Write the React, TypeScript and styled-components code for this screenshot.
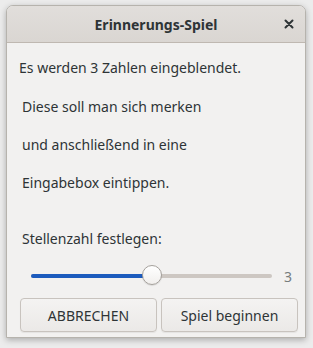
import styled, { createGlobalStyle } from "styled-components";

const GlobalStyle = createGlobalStyle`
  html, body {
    margin: 0;
    padding: 0;
    background: #e9e9e9;
    width: 313px;
    height: 348px;
    overflow: hidden;
  }
  body {
    font-family: "Noto Sans", "DejaVu Sans", sans-serif;
    color: #2e3436;
  }
`;

const Screen = styled.div`
  width: 313px;
  height: 348px;
  padding: 5px 7px 12px 6px;
  box-sizing: border-box;
  background: #ececec;
`;

const Dialog = styled.div`
  height: 100%;
  display: flex;
  flex-direction: column;
  background: #f2f1f0;
  border: 1px solid #b6b3ad;
  border-radius: 7px 7px 0 0;
  box-shadow: 0 2px 6px rgba(0, 0, 0, 0.28);
  overflow: hidden;
`;

const HeaderBar = styled.div`
  height: 36px;
  display: flex;
  align-items: center;
  justify-content: center;
  position: relative;
  background: linear-gradient(#e1dedb, #dad6d2);
  border-bottom: 1px solid #bfb8b1;
`;

const Title = styled.div`
  font-size: 14px;
  font-weight: bold;
  color: #2e3436;
`;

const CloseButton = styled.div`
  position: absolute;
  right: 9px;
  top: 11px;
  width: 14px;
  height: 14px;
  display: flex;
  align-items: center;
  justify-content: center;
`;

const Body = styled.div`
  flex: 1;
  display: flex;
  flex-direction: column;
  padding: 16px 7px 0 12px;
`;

const Line = styled.div<{ $indent?: number; $gap?: number }>`
  font-size: 14px;
  line-height: 18px;
  padding-left: ${(p) => p.$indent ?? 0}px;
  margin-bottom: ${(p) => p.$gap ?? 0}px;
`;

const SliderRow = styled.div`
  display: flex;
  align-items: center;
  height: 22px;
  margin-top: 17px;
  padding-left: 12px;
`;

const Track = styled.div`
  flex: 1;
  height: 4px;
  border-radius: 2px;
  background: #cdc7c2;
  position: relative;
  margin-right: 12px;
`;

const Fill = styled.div`
  height: 100%;
  border-radius: 2px;
  background: #1c5bbd;
`;

const Thumb = styled.div`
  position: absolute;
  top: -9px;
  width: 20px;
  height: 20px;
  margin-left: -10px;
  border-radius: 50%;
  box-sizing: border-box;
  border: 1px solid #a5a19c;
  background: linear-gradient(#ffffff, #f1efed);
  box-shadow: 0 1px 1px rgba(0, 0, 0, 0.1);
`;

const Value = styled.div`
  font-size: 14px;
  color: #777c7d;
  width: 12px;
  margin-right: 2px;
`;

const Buttons = styled.div`
  display: grid;
  grid-template-columns: 1fr 1fr;
  gap: 4px;
  margin-top: 11px;
  padding-left: 1px;
`;

const Button = styled.div`
  height: 34px;
  display: flex;
  align-items: center;
  justify-content: center;
  box-sizing: border-box;
  border: 1px solid #c8c3be;
  border-radius: 4px;
  background: linear-gradient(#f4f3f2, #ebe9e7);
  box-shadow: 0 1px 1px rgba(0, 0, 0, 0.06);
  font-size: 14px;
  color: #2e3436;
`;

export default function App() {
  const value = 3;
  const min = 1;
  const max = 5;
  const pct = ((value - min) / (max - min)) * 100;
  return (
    <>
      <GlobalStyle />
      <Screen>
        <Dialog>
          <HeaderBar>
            <Title>Erinnerungs-Spiel</Title>
            <CloseButton>
              <svg width="10" height="10" viewBox="0 0 10 10">
                <path d="M1.5 1.5 L8.5 8.5 M8.5 1.5 L1.5 8.5" stroke="#2e3436" strokeWidth="2" strokeLinecap="round" />
              </svg>
            </CloseButton>
          </HeaderBar>
          <Body>
            <Line $gap={21}>Es werden 3 Zahlen eingeblendet.</Line>
            <Line $indent={3} $gap={20}>Diese soll man sich merken</Line>
            <Line $indent={3} $gap={20}>und anschließend in eine</Line>
            <Line $indent={3} $gap={38}>Eingabebox eintippen.</Line>
            <Line $indent={3}>Stellenzahl festlegen:</Line>
            <SliderRow>
              <Track>
                <Fill style={{ width: `${pct}%` }} />
                <Thumb style={{ left: `${pct}%` }} />
              </Track>
              <Value>3</Value>
            </SliderRow>
            <Buttons>
              <Button>ABBRECHEN</Button>
              <Button>Spiel beginnen</Button>
            </Buttons>
          </Body>
        </Dialog>
      </Screen>
    </>
  );
}
